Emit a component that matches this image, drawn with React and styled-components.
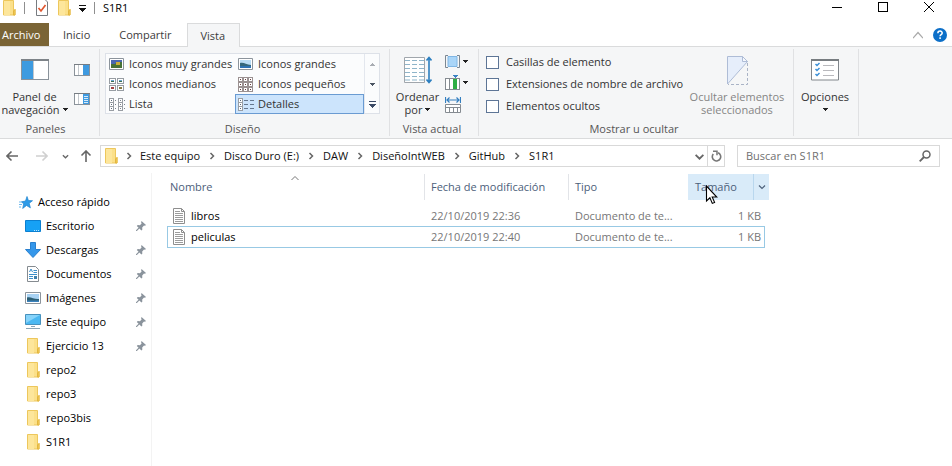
import React from "react";
import styled, { createGlobalStyle, css } from "styled-components";

const Global = createGlobalStyle`
  * { box-sizing: border-box; }
  body {
    margin: 0;
    background: #fff;
    color: #000;
    font: 11px/16px "Open Sans", "Noto Sans", sans-serif;
  }
  button, input { font: inherit; color: inherit; }
  button { padding: 0; border: 0; background: none; }
  svg { display: block; flex: none; }
`;

const Window = styled.div`
  display: flex;
  flex-direction: column;
  min-height: 100vh;
`;

/* ---------- title bar ---------- */

const TitleBar = styled.header`
  display: flex;
  height: 23px;
`;
const QuickAccess = styled.div`
  display: flex;
  align-items: center;
  height: 16px;
  padding-left: 3px;
  gap: 8px;
`;
const QuickButton = styled.button`
  display: flex;
`;
const Separator = styled.span`
  width: 1px;
  height: 12px;
  background: #8f8f8f;
`;
const Title = styled.h1`
  margin: 0;
  font-size: 11px;
  font-weight: 400;
`;
const DocumentSlot = styled.span`
  display: flex;
  padding: 0 2px 0 3px;
`;
const WindowControls = styled.div`
  display: flex;
  margin-left: auto;
`;
const WindowButton = styled.button`
  display: flex;
  justify-content: center;
  width: 46px;
  padding-top: 1px;
`;

/* ---------- ribbon ---------- */

const Tabs = styled.nav`
  display: flex;
  height: 23px;
  align-items: stretch;
`;
const Tab = styled.button`
  display: flex;
  align-items: center;
  padding: 0 15px 0 14px;
  color: #3c3c3c;
  ${(p) =>
    p.$file &&
    css`
      width: 49px;
      padding: 0 0 0 2px;
      background: #7a6435;
      color: #fff;
    `}
  ${(p) =>
    p.$active &&
    css`
      width: 53px;
      padding: 0 13px;
      margin-bottom: -1px;
      background: #f5f6f7;
      border: 1px solid #dadbdc;
      border-bottom: 0;
      position: relative;
    `}
`;
const TabTools = styled.div`
  display: flex;
  align-items: center;
  gap: 10px;
  margin-left: auto;
  padding-right: 5px;
`;
const Ribbon = styled.section`
  display: flex;
  height: 93px;
  background: #f5f6f7;
  border: solid #dadbdc;
  border-width: 1px 0;
`;
const Group = styled.section`
  display: flex;
  flex-direction: column;
  width: ${(p) => p.$w}px;
  margin: 2px 0;
  border-right: 1px solid #e0e1e3;
`;
const GroupBody = styled.div`
  display: flex;
  flex: 1;
  gap: ${(p) => p.$gap || 0}px;
  padding: ${(p) => p.$pad};
`;
const GroupName = styled.h2`
  margin: 0;
  padding-right: ${(p) => p.$shift || 0}px;
  height: 15px;
  color: #555;
  font-size: 11px;
  font-weight: 400;
  line-height: 15px;
  text-align: center;
`;
const BigButton = styled.button`
  display: flex;
  flex-direction: column;
  align-items: center;
  width: ${(p) => p.$w}px;
  color: ${(p) => (p.disabled ? "#858585" : "#333")};
  line-height: 13px;
  white-space: nowrap;
`;
const BigIcon = styled.span`
  display: flex;
  align-items: center;
  height: 34px;
  margin-bottom: 3px;
`;
const LabelLine = styled.span`
  display: flex;
  align-items: center;
  gap: 3px;
  min-height: 13px;
`;
const SmallButtons = styled.div`
  display: flex;
  flex-direction: column;
  gap: ${(p) => p.$gap}px;
  padding-top: ${(p) => p.$top}px;
`;
const SmallButton = styled.button`
  display: flex;
  align-items: center;
  gap: 3px;
`;

const Gallery = styled.div`
  display: flex;
  width: 275px;
  height: 61px;
  background: #fbfcfd;
  border: 1px solid #dde1e8;
`;
const Views = styled.div`
  display: grid;
  grid-template-columns: 129px 129px;
  grid-template-rows: repeat(3, 20px);
  flex: 1;
`;
const View = styled.button`
  display: flex;
  align-items: center;
  gap: 5px;
  padding-left: 2px;
  border: 1px solid ${(p) => (p.$selected ? "#6a9bd2" : "transparent")};
  background: ${(p) => (p.$selected ? "#cce4fc" : "transparent")};
  color: #333;
  white-space: nowrap;
`;
const GalleryScroll = styled.div`
  display: grid;
  grid-template-rows: repeat(3, 20px);
  width: 15px;
  border-left: 1px solid #e3e7ee;
`;
const ScrollButton = styled.button`
  display: flex;
  align-items: center;
  justify-content: center;
`;

const Checks = styled.div`
  display: flex;
  flex-direction: column;
  gap: 6px;
  width: 200px;
  padding-top: 1px;
`;
const Check = styled.label`
  display: flex;
  align-items: center;
  gap: 7px;
  color: #333;
  white-space: nowrap;
`;
const Box = styled.input`
  appearance: none;
  width: 13px;
  height: 13px;
  margin: 0;
  border: 1px solid #5d7596;
  background: #fff;
`;

/* ---------- address bar ---------- */

const AddressRow = styled.div`
  display: flex;
  align-items: center;
  padding: 6px 12px 6px 6px;
`;
const NavButton = styled.button`
  display: flex;
  margin-right: ${(p) => p.$gap}px;
`;
const Address = styled.div`
  display: flex;
  align-items: center;
  flex: 1;
  height: 22px;
  padding-left: 4px;
  border: 1px solid #d9d9d9;
`;
const Crumbs = styled.ol`
  display: flex;
  flex: 1;
  margin: 0;
  padding: 0;
  list-style: none;
`;
const Crumb = styled.li`
  display: flex;
  align-items: center;
`;
const CrumbLink = styled.a`
  color: #111;
  text-decoration: none;
  white-space: nowrap;
`;
const Chevron = styled.span`
  display: flex;
  justify-content: center;
  width: 24px;
  ${Crumb}:first-child & { width: 22px; }
`;
const AddressButton = styled.button`
  display: flex;
  align-items: center;
  justify-content: center;
  width: 17px;
  height: 20px;
  border-left: 1px solid ${(p) => (p.$line ? "#d9d9d9" : "transparent")};
`;
const Search = styled.label`
  display: flex;
  align-items: center;
  width: 203px;
  height: 22px;
  margin-left: 12px;
  padding: 0 8px;
  border: 1px solid #d9d9d9;
`;
const SearchInput = styled.input`
  flex: 1;
  min-width: 0;
  padding: 0;
  border: 0;
  outline: 0;
  &::placeholder { color: #707070; opacity: 1; }
`;

/* ---------- content ---------- */

const Content = styled.div`
  display: flex;
  flex: 1;
`;
const Sidebar = styled.nav`
  width: 152px;
  padding-top: 17px;
  border-right: 1px solid #f3f3f3;
`;
const Place = styled.a`
  display: flex;
  align-items: center;
  gap: ${(p) => (p.$root ? 5 : 4)}px;
  height: 24px;
  padding: 0 5px 0 ${(p) => (p.$root ? 19 : 25)}px;
  color: #000;
  text-decoration: none;
`;
const PlaceName = styled.span`
  flex: 1;
`;
const PlaceIcon = styled.span`
  display: flex;
  justify-content: center;
  width: 17px;
`;
const ViewIcon = styled.span`
  display: flex;
  justify-content: center;
  width: 15px;
`;
const Files = styled.main`
  flex: 1;
  padding: 1px 0 0 15px;
`;
const FileTable = styled.table`
  width: 602px;
  table-layout: fixed;
  border-collapse: separate;
  border-spacing: 0;
`;
const HeadRow = styled.tr`
  height: 26px;
`;
const HeadCell = styled.th`
  position: relative;
  padding: 0 0 0 ${(p) => p.$pad || 6}px;
  border-right: ${(p) => (p.$hover ? 0 : 1)}px solid ${(p) => (p.$last ? "transparent" : "#e2e4e8")};
  background: ${(p) => (p.$hover ? "#d9ebf9" : "transparent")};
  color: #4c607a;
  font-weight: 400;
  text-align: left;
`;
const SortMark = styled.span`
  position: absolute;
  top: 0;
  left: 50%;
  margin-left: -6px;
`;
const HeadSplit = styled.span`
  display: flex;
  align-items: center;
  justify-content: space-between;
`;
const HeadMenu = styled.button`
  display: flex;
  align-items: center;
  justify-content: center;
  width: 16px;
  height: 26px;
  border-left: 1px solid #b9d7ee;
`;
const Pointer = styled.span`
  position: absolute;
  left: 17px;
  top: 11px;
`;
const Spacer = styled.tr`
  height: 5px;
`;
const FileRow = styled.tr`
  height: ${(p) => (p.$selected ? 22 : 21)}px;
`;
const Cell = styled.td`
  padding: 0 ${(p) => (p.$right ? 3 : 0)}px 0 6px;
  color: #767676;
  text-align: ${(p) => (p.$right ? "right" : "left")};
  white-space: nowrap;
  border: solid ${(p) => (p.$selected ? "#98c9e4" : "transparent")};
  border-width: ${(p) => (p.$selected ? 1 : 0)}px 0;
  &:first-child { border-left-width: 1px; padding-left: 5px; }
  &:nth-child(4) { border-right-width: 1px; }
`;
const FileName = styled.span`
  display: flex;
  align-items: center;
  gap: 6px;
  color: #000;
`;

/* ---------- icons ---------- */

const Folder = () => (
  <svg width="13" height="16" viewBox="0 0 13 16">
    <path d="M.5.5h10v10.5l1.500-1.500v5.500H.5z" fill="#fbe08a" stroke="#edc75c" />
    <path d="M1 1h6v14H1z" fill="#fde69b" />
    <path d="M10.500 15v-4l1.500-1.500v5.500z" fill="#f5cf5e" stroke="#e3b63e" />
  </svg>
);
const Properties = () => (
  <svg width="12" height="16" viewBox="0 0 12 16">
    <path d="M.5-.5h8.500l2.500 2.500v13.500H.5z" fill="#fff" stroke="#777b80" />
    <path d="m2.500 8 2.500 3 4.500-6" fill="none" stroke="#e0562f" strokeWidth="1.700" />
  </svg>
);
const Down = ({ color = "#222" }) => (
  <svg width="5" height="3" viewBox="0 0 5 3" shapeRendering="crispEdges"><path d="M0 0h5v1H4v1H3v1H2V2H1V1H0z" fill={color} /></svg>
);
const BarDown = ({ color = "#111" }) => (
  <svg width="7" height="7" viewBox="0 0 7 7" shapeRendering="crispEdges"><path d="M0 0h7v1H0zM0 3h7v1H6v1H5v1H4v1H3V6H2V5H1V4H0z" fill={color} /></svg>
);
const Caret = ({ d, w = 8, h = 8, color = "#666", stroke = 1.5 }) => (
  <svg width={w} height={h} viewBox="0 0 8 8"><path d={d} fill="none" stroke={color} strokeWidth={stroke} /></svg>
);
const PaneIcon = () => (
  <svg width="28" height="22" viewBox="0 0 28 22" shapeRendering="crispEdges">
    <path d="M.5.500h27v20H.5z" fill="#fff" stroke="#8a929a" />
    <path d="M0 0h28v2H0z" fill="#7d8388" />
    <path d="M1 2h11v18H1z" fill="#3e9be0" />
    <path d="M12 2h1v18h-1z" fill="#c3c8cd" />
  </svg>
);
const PreviewIcon = ({ lines }) => (
  <svg width="16" height="12" viewBox="0 0 16 12" shapeRendering="crispEdges">
    <path d="M.5.500h15v11H.5z" fill="#fff" stroke="#8a929a" />
    <path d="M0 0h16v1H0z" fill="#777d83" />
    <path d="M4 1h1v10H4z" fill="#c3c8cd" />
    <path d="M9 1h6v10H9z" fill="#3f9ae0" />
    {lines && <path d="M10 3h4v1h-4zM10 5h4v1h-4zM10 7h4v1h-4zM10 9h4v1h-4z" fill="#d5eafa" />}
  </svg>
);
const Picture = ({ dark }) => (
  <svg width="15" height="12" viewBox="0 0 15 12">
    <path d="M.5.500h14v11H.5z" fill="#fff" stroke="#8c949c" />
    <path d="M2 2h11v8H2z" fill={dark ? "#4967b0" : "#b9dcf5"} />
    <path d={dark ? "M2 6h4l2-2h5v6H2z" : "M2 5c4-1 6 2 11 2v3H2z"} fill={dark ? "#467136" : "#34677c"} />
    {dark ? <path d="M7 4h4v3H7z" fill="#c9ae35" /> : <path d="M2 8h11v2H2z" fill="#2d72b4" />}
  </svg>
);
const MediumIcon = () => (
  <svg width="15" height="13" viewBox="0 0 15 13" shapeRendering="crispEdges">
    <path d="M.5.500h6v5h-6zM8.500.500h6v5h-6zM.5 7.500h6v5h-6zM8.500 7.500h6v5h-6z" fill="#fff" stroke="#979da3" />
    <path d="M2 2h3v1H2zM10 2h3v1h-3z" fill="#68a6d2" />
    <path d="M2 3h3v1H2zM10 3h3v1h-3z" fill="#3f6e4e" />
    <path d="M2 9h3v2H2z" fill="#a34040" /><path d="M10 9h3v2h-3z" fill="#8a7a42" />
  </svg>
);
const squares = [0, 5, 10];
const SmallIcon = () => (
  <svg width="15" height="15" viewBox="0 0 15 15" shapeRendering="crispEdges">
    {squares.flatMap((x) => squares.map((y) => (
      <g key={`${x}-${y}`}>
        <path d={`M${x}.500 ${y}.500h4v4h-4z`} fill="#fff" stroke="#9b9191" />
        <path d={`M${x + 2} ${y + 2}h1v1h-1z`} fill="#6b4040" />
      </g>
    )))}
  </svg>
);
const ListIcon = ({ details }) => (
  <svg width="16" height="13" viewBox="0 0 16 13" shapeRendering="crispEdges">
    <path d="M.5.500h4v12h-4zM.5 4.500h4M.5 8.500h4" fill="#fff" stroke="#999ea4" />
    <path d="M2 2h1v1H2zM2 6h1v1H2zM2 10h1v1H2z" fill="#596878" />
    {details ? (
      <path d="M6 2h4v1H6zM6 6h4v1H6zM6 10h4v1H6zM12 2h4v1h-4zM12 6h4v1h-4zM12 10h4v1h-4z" fill="#66788f" />
    ) : (
      <>
        <path d="M9.500.500h4v12h-4zM9.500 4.500h4M9.500 8.500h4" fill="#fff" stroke="#999ea4" />
        <path d="M11 2h1v1h-1zM11 6h1v1h-1zM11 10h1v1h-1zM6 2h1v1H6zM6 6h1v1H6zM6 10h1v1H6zM15 2h1v1h-1zM15 6h1v1h-1zM15 10h1v1h-1z" fill="#7d858d" />
      </>
    )}
  </svg>
);
const SortIcon = () => (
  <svg width="28" height="28" viewBox="0 0 28 28">
    <path d="M.5 1.500h20v25H.5z" fill="#fff" stroke="#a0a6ac" />
    <path d="M1 4.500h19M1 8.500h19M1 12.500h19M1 16.500h19M1 20.500h19M1 24h19" stroke="#8fb5ca" strokeDasharray="5 2" />
    <path d="M25 2v24M22.500 4.500 25 1.500l2.500 3M22.500 23.500l2.500 3 2.500-3" fill="none" stroke="#2c7fc0" strokeWidth="1.600" />
  </svg>
);
const GroupIcon = () => (
  <svg width="15" height="13" viewBox="0 0 15 13">
    <path d="M3 1.500h9v10H3z" fill="#a9d5f8" stroke="#80b6e4" />
    <path d="M3 .5H.5v12H3M12 .5h2.500v12H12" fill="none" stroke="#7b8792" />
  </svg>
);
const AddColumnIcon = () => (
  <svg width="15" height="15" viewBox="0 0 15 15" shapeRendering="crispEdges">
    <path d="M.5 3.500h14v11H.5zM4.500 3.500v11M8.500 3.500v11" fill="#fff" stroke="#858b91" />
    <path d="M8 4h4v10H8z" fill="#2fae45" />
    <path d="M8 0h5v1h-1v1h-1v1h-1V2H9V1H8z" fill="#3a82c4" />
  </svg>
);
const FitColumnsIcon = () => (
  <svg width="16" height="16" viewBox="0 0 16 16">
    <path d="M.5 0v6M15.500 0v6M2 3h12M4.500.5 2 3l2.500 2.500M11.500.5 14 3l-2.500 2.500" fill="none" stroke="#347fc0" strokeWidth="1.200" />
    <path d="M.5 7.500h15v8H.5zM.5 10.500h15M4.500 10.500v5M8.500 10.500v5M12.500 10.500v5" fill="#fff" stroke="#858b91" />
  </svg>
);
const HideIcon = () => (
  <svg width="21" height="29" viewBox="0 0 21 29">
    <path d="M.5.500h15l5 5L.5 28z" fill="#e6eefb" stroke="#aebcd6" />
    <path d="M15.500.500v5h5z" fill="#f5f8fd" stroke="#aebcd6" />
    <path d="M20.500 7v21.500H1" fill="none" stroke="#a9b3c6" strokeDasharray="3 2" />
  </svg>
);
const OptionsIcon = () => (
  <svg width="28" height="22" viewBox="0 0 28 22">
    <path d="M.5.500h27v20.500H.5z" fill="#fff" stroke="#81868b" />
    <path d="M0 0h28v2H0z" fill="#777c80" />
    <path d="m4.500 5 1.500 1.500L8.500 4M4.500 10 6 11.500 8.500 9M4.500 15 6 16.500 8.500 14" fill="none" stroke="#3b8fd6" strokeWidth="1.500" />
    <path d="M12 6.500h11M12 11.500h11M12 16.500h11" stroke="#b9b9bd" />
  </svg>
);
const Arrow = ({ d, color = "#666" }) => (
  <svg width="12" height="12" viewBox="0 0 12 12"><path d={d} fill="none" stroke={color} strokeWidth="1.600" /></svg>
);
const Refresh = () => (
  <svg width="11" height="12" viewBox="0 0 11 12">
    <path d="M7 2.800A4.200 4.200 0 1 1 2.300 4" fill="none" stroke="#777" strokeWidth="1.600" />
    <path d="M2 1.200h4v4" fill="none" stroke="#777" strokeWidth="1.500" />
  </svg>
);
const Magnifier = () => (
  <svg width="12" height="12" viewBox="0 0 12 12">
    <circle cx="7.500" cy="4.500" r="3.500" fill="none" stroke="#666" strokeWidth="1.500" />
    <path d="M5 7 .7 11.300" stroke="#666" strokeWidth="1.800" />
  </svg>
);
const Help = () => (
  <svg width="14" height="14" viewBox="0 0 14 14">
    <circle cx="7" cy="7" r="7" fill="#0c6fc8" />
    <path d="M4.900 5.200c0-2.800 4.300-2.700 4.300-.2 0 1.600-2.100 1.600-2.100 3.200M7.100 9.300v1.700" fill="none" stroke="#fff" strokeWidth="1.500" />
  </svg>
);
const Star = () => (
  <svg width="14" height="13" viewBox="0 0 14 13">
    <path d="m8 .5 1.400 4 4.100.2-3.300 2.600 1.200 4.500-3.900-2.300-3.800 2.900 1-4.500L2.500 5.800l4-.8z" fill="#2d9be8" stroke="#1e82cf" strokeWidth=".7" />
    <path d="M0 6h3M0 8.500h3M0 11h2" stroke="#6db9ee" />
  </svg>
);
const Desktop = () => (
  <svg width="17" height="14" viewBox="0 0 17 14">
    <path d="M.5 1.500h15v11H.5z" fill="#16a1f5" stroke="#0b7fd0" /><path d="M9 11.500h5" stroke="#bfe4fb" strokeDasharray="1 1" />
  </svg>
);
const Download = () => (
  <svg width="17" height="16" viewBox="0 0 17 16"><path d="M5.500.500h5v7h5L8 15.500.500 7.500h5z" fill="#3597ea" stroke="#2a80cf" /></svg>
);
const Documents = () => (
  <svg width="17" height="16" viewBox="0 0 17 16">
    <path d="M2.500.500h8l3 3v12h-11z" fill="#fff" stroke="#858b90" />
    <path d="m4.500 6 1.500-3 1.500 3M8.500 4.500H12M8.500 6.500H12M4 8.500h8M4 10.500h4M4 12.500h4" fill="none" stroke="#3b8fcb" />
    <path d="M9 10h3v3H9z" fill="#3f80ac" />
  </svg>
);
const Images = () => (
  <svg width="17" height="12" viewBox="0 0 17 12">
    <path d="M.5.500h15v11H.5z" fill="#fff" stroke="#8c949c" />
    <path d="M2 2h12v8H2z" fill="#a8d2f3" />
    <path d="M2 5.500c4-1 7 2 12 1.500v3H2z" fill="#2d5f74" /><path d="M2 8.500h12V10H2z" fill="#3c83bd" />
  </svg>
);
const Computer = () => (
  <svg width="17" height="16" viewBox="0 0 17 16">
    <path d="M.5.500h15v10H.5z" fill="#4bb8f2" stroke="#4791bd" /><path d="M1 1h14L1 9z" fill="#86d3fa" />
    <path d="M6 12.500h4M1 14.500h14" stroke="#8ba5b6" />
  </svg>
);
const Pin = () => (
  <svg width="10" height="10" viewBox="0 0 10 10">
    <path d="m5.500 0 4.500 4-1 .8-1-.2-1.800 1.900.1 2.200-.9.800L.8 4.900l.9-.8 2.200.2L5.600 2.400l-.5-1.200z" fill="#8a939c" />
    <path d="M3.200 6.800 0 10" stroke="#8a939c" strokeWidth="1.200" />
  </svg>
);
const TextFile = () => (
  <svg width="12" height="16" viewBox="0 0 12 16">
    <path d="M.5.500h8l3 3v12H.5z" fill="#fff" stroke="#8e8e8e" />
    <path d="M8.500.500v3h3" fill="none" stroke="#8e8e8e" />
    <path d="M2 3.500h5M2 5.500h8M2 7.500h8M2 9.500h8M2 11.500h8M2 13.500h8" stroke="#9c9c9c" />
  </svg>
);
const Cursor = () => (
  <svg width="13" height="20" viewBox="0 0 13 20">
    <path d="M1.500 1v15l3.400-3.200 2.400 5.600 2.300-1-2.400-5.400h4.600z" fill="#fff" stroke="#000" strokeWidth="1.100" />
  </svg>
);

/* ---------- data ---------- */

const views = [
  ["Iconos muy grandes", <Picture dark />],
  ["Iconos grandes", <Picture />],
  ["Iconos medianos", <MediumIcon />],
  ["Iconos pequeños", <SmallIcon />],
  ["Lista", <ListIcon />],
  ["Detalles", <ListIcon details />],
];
const checks = ["Casillas de elemento", "Extensiones de nombre de archivo", "Elementos ocultos"];
const crumbs = ["Este equipo", "Disco Duro (E:)", "DAW", "DiseñoIntWEB", "GitHub", "S1R1"];
const places = [
  ["Escritorio", <Desktop />, true],
  ["Descargas", <Download />, true],
  ["Documentos", <Documents />, true],
  ["Imágenes", <Images />, true],
  ["Este equipo", <Computer />, true],
  ["Ejercicio 13", <Folder />, true],
  ["repo2", <Folder />],
  ["repo3", <Folder />],
  ["repo3bis", <Folder />],
  ["S1R1", <Folder />],
];
const files = [
  ["libros", "22/10/2019 22:36"],
  ["peliculas", "22/10/2019 22:40"],
];

export default function App() {
  return (
    <Window>
      <Global />
      <TitleBar>
        <QuickAccess>
          <Folder />
          <Separator />
          <DocumentSlot>
            <QuickButton aria-label="Propiedades"><Properties /></QuickButton>
          </DocumentSlot>
          <QuickButton aria-label="Nueva carpeta"><Folder /></QuickButton>
          <QuickButton aria-label="Personalizar"><BarDown /></QuickButton>
          <Separator />
          <Title>S1R1</Title>
        </QuickAccess>
        <WindowControls>
          <WindowButton aria-label="Minimizar">
            <svg width="12" height="12" viewBox="0 0 12 12" shapeRendering="crispEdges"><path d="M1 6h10v1H1z" /></svg>
          </WindowButton>
          <WindowButton aria-label="Maximizar">
            <svg width="12" height="12" viewBox="0 0 12 12" shapeRendering="crispEdges"><path d="M1.500 1.500h9v9h-9z" fill="none" stroke="#000" /></svg>
          </WindowButton>
          <WindowButton aria-label="Cerrar">
            <svg width="12" height="12" viewBox="0 0 12 12"><path d="m1 1 10 10M11 1 1 11" stroke="#000" /></svg>
          </WindowButton>
        </WindowControls>
      </TitleBar>

      <Tabs>
        <Tab $file>Archivo</Tab>
        <Tab>Inicio</Tab>
        <Tab>Compartir</Tab>
        <Tab $active>Vista</Tab>
        <TabTools>
          <SmallButton aria-label="Minimizar la cinta"><Caret d="M0 6.500 4 2l4 4.500" w={10} h={10} color="#aaa" stroke={1} /></SmallButton>
          <SmallButton aria-label="Ayuda"><Help /></SmallButton>
        </TabTools>
      </Tabs>

      <Ribbon>
        <Group $w={100}>
          <GroupBody $pad="4px 0 0 0" $gap={5}>
            <BigButton $w={69}>
              <BigIcon><PaneIcon /></BigIcon>
              <LabelLine>Panel de</LabelLine>
              <LabelLine>navegación <Down /></LabelLine>
            </BigButton>
            <SmallButtons $gap={17} $top={11}>
              <SmallButton aria-label="Panel de vista previa"><PreviewIcon /></SmallButton>
              <SmallButton aria-label="Panel de detalles"><PreviewIcon lines /></SmallButton>
            </SmallButtons>
          </GroupBody>
          <GroupName $shift={8}>Paneles</GroupName>
        </Group>

        <Group $w={290}>
          <GroupBody $pad="4px 0 0 5px">
            <Gallery>
              <Views>
                {views.map(([name, icon]) => (
                  <View key={name} $selected={name === "Detalles"}><ViewIcon>{icon}</ViewIcon>{name}</View>
                ))}
              </Views>
              <GalleryScroll>
                <ScrollButton aria-label="Fila anterior">
                  <svg width="5" height="3" viewBox="0 0 5 3" shapeRendering="crispEdges"><path d="M2 0h1v1h1v1h1v1H0V2h1V1h1z" fill="#a9adb3" /></svg>
                </ScrollButton>
                <ScrollButton aria-label="Fila siguiente"><Down color="#4b5563" /></ScrollButton>
                <ScrollButton aria-label="Más"><BarDown color="#3c4b66" /></ScrollButton>
              </GalleryScroll>
            </Gallery>
          </GroupBody>
          <GroupName $shift={4}>Diseño</GroupName>
        </Group>

        <Group $w={89}>
          <GroupBody $pad="4px 0 0 5px" $gap={5}>
            <BigButton $w={45}>
              <BigIcon><SortIcon /></BigIcon>
              <LabelLine>Ordenar</LabelLine>
              <LabelLine>por <Down /></LabelLine>
            </BigButton>
            <SmallButtons $gap={7} $top={2}>
              <SmallButton aria-label="Agrupar por"><GroupIcon /><Down /></SmallButton>
              <SmallButton aria-label="Agregar columnas"><AddColumnIcon /><Down /></SmallButton>
              <SmallButton aria-label="Ajustar columnas"><FitColumnsIcon /></SmallButton>
            </SmallButtons>
          </GroupBody>
          <GroupName $shift={4}>Vista actual</GroupName>
        </Group>

        <Group $w={315}>
          <GroupBody $pad="4px 0 0 7px" $gap={3}>
            <Checks>
              {checks.map((name) => (
                <Check key={name}><Box type="checkbox" />{name}</Check>
              ))}
            </Checks>
            <BigButton $w={96} disabled>
              <BigIcon><HideIcon /></BigIcon>
              <LabelLine>Ocultar elementos</LabelLine>
              <LabelLine>seleccionados</LabelLine>
            </BigButton>
          </GroupBody>
          <GroupName $shift={4}>Mostrar u ocultar</GroupName>
        </Group>

        <Group $w={65}>
          <GroupBody $pad="4px 0 0 3px">
            <BigButton $w={56}>
              <BigIcon><OptionsIcon /></BigIcon>
              <LabelLine>Opciones</LabelLine>
              <LabelLine><Down /></LabelLine>
            </BigButton>
          </GroupBody>
        </Group>
      </Ribbon>

      <AddressRow>
        <NavButton aria-label="Atrás" $gap={18}><Arrow d="M12 6H1M5.500 1.500 1 6l4.500 4.500" /></NavButton>
        <NavButton aria-label="Adelante" $gap={14}><Arrow color="#d0d0d0" d="M0 6h11M6.500 1.500 11 6l-4.500 4.500" /></NavButton>
        <NavButton aria-label="Ubicaciones recientes" $gap={11}><Caret d="m1 2.500 3 3 3-3" w={7} h={7} /></NavButton>
        <NavButton aria-label="Subir" $gap={8}><Arrow d="M6 12V1M1.500 5.500 6 1l4.500 4.500" /></NavButton>
        <Address>
          <Folder />
          <Crumbs>
            {crumbs.map((name) => (
              <Crumb key={name}>
                <Chevron><Caret d="m2.500 1 3 3-3 3" /></Chevron>
                <CrumbLink href="#">{name}</CrumbLink>
              </Crumb>
            ))}
          </Crumbs>
          <AddressButton aria-label="Historial"><Caret d="m.5 2.500 3.500 3.500 3.500-3.500" w={9} h={9} stroke={1.700} /></AddressButton>
          <AddressButton aria-label="Actualizar" $line><Refresh /></AddressButton>
        </Address>
        <Search>
          <SearchInput aria-label="Buscar en S1R1" placeholder="Buscar en S1R1" />
          <Magnifier />
        </Search>
      </AddressRow>

      <Content>
        <Sidebar>
          <Place href="#" $root><Star /><PlaceName>Acceso rápido</PlaceName></Place>
          {places.map(([name, icon, pinned]) => (
            <Place href="#" key={name}>
              <PlaceIcon>{icon}</PlaceIcon>
              <PlaceName>{name}</PlaceName>
              {pinned && <Pin />}
            </Place>
          ))}
        </Sidebar>
        <Files>
          <FileTable>
            <colgroup>
              <col width="258" /><col width="144" /><col width="119" /><col width="77" /><col width="4" />
            </colgroup>
            <thead>
              <HeadRow>
                <HeadCell $pad={3}>Nombre<SortMark><Caret d="M.5 6 4 2.500 7.500 6" w={10} h={8} color="#777" stroke={1} /></SortMark></HeadCell>
                <HeadCell>Fecha de modificación</HeadCell>
                <HeadCell $last>Tipo</HeadCell>
                <HeadCell $hover $pad={7} colSpan={2}>
                  <HeadSplit>
                    Tamaño
                    <HeadMenu aria-label="Filtrar"><Caret d="m1 2.500 3 3 3-3" color="#4c607a" stroke={1.200} /></HeadMenu>
                  </HeadSplit>
                  <Pointer><Cursor /></Pointer>
                </HeadCell>
              </HeadRow>
            </thead>
            <tbody>
              <Spacer />
              {files.map(([name, date], i) => (
                <FileRow key={name} $selected={i === 1}>
                  <Cell $selected={i === 1}><FileName><TextFile />{name}</FileName></Cell>
                  <Cell $selected={i === 1}>{date}</Cell>
                  <Cell $selected={i === 1}>Documento de te...</Cell>
                  <Cell $selected={i === 1} $right>1 KB</Cell>
                </FileRow>
              ))}
            </tbody>
          </FileTable>
        </Files>
      </Content>
    </Window>
  );
}
